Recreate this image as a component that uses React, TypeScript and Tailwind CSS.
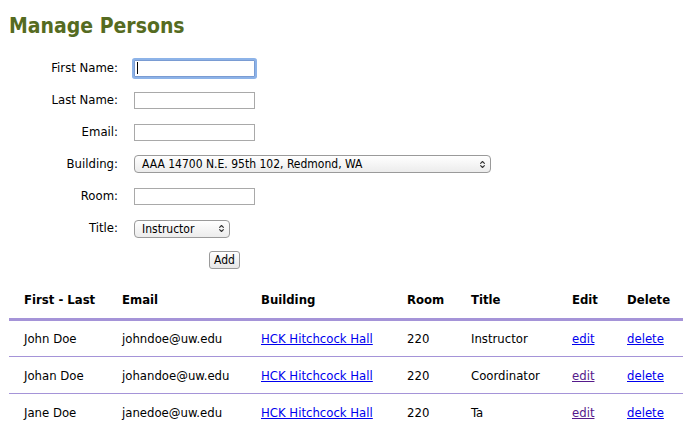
import { ChevronsUpDown } from "lucide-react";

const people = [
  { name: "John Doe", email: "johndoe@uw.edu", title: "Instructor", visited: false },
  { name: "Johan Doe", email: "johandoe@uw.edu", title: "Coordinator", visited: true },
  { name: "Jane Doe", email: "janedoe@uw.edu", title: "Ta", visited: true },
];

function Field({ label, children }: { label: string; children: React.ReactNode }) {
  return (
    <div className="flex items-center h-8">
      <label className="w-[118px] pr-0 text-right">{label}</label>
      <div className="ml-4 flex items-center">{children}</div>
    </div>
  );
}

function TextBox({ focused }: { focused?: boolean }) {
  return (
    <div
      className={
        focused
          ? "w-[121px] h-[17px] border border-[#7a9cd3] bg-white shadow-[0_0_0_2px_#8db3e8] rounded-[1px] flex items-center pl-[2px]"
          : "w-[121px] h-[17px] border border-[#a9a9a9] bg-white"
      }
    >
      {focused && <span className="w-px h-[12px] bg-black" />}
    </div>
  );
}

function Select({ value, width }: { value: string; width: string }) {
  return (
    <div
      className={`${width} h-[18px] border border-[#9a9a9a] rounded-[4px] bg-gradient-to-b from-white to-[#ececec] flex items-center justify-between pl-[7px] pr-[3px] text-[12px]`}
    >
      <span>{value}</span>
      <ChevronsUpDown className="w-[9px] h-[9px] text-[#333]" strokeWidth={3} />
    </div>
  );
}

export default function App() {
  return (
    <div
      className="bg-white w-[694px] h-[446px] overflow-hidden text-[13px] text-black"
      style={{ fontFamily: '"DejaVu Sans Condensed", "DejaVu Sans", sans-serif' }}
    >
      <h1 className="pl-[9px] pt-[12px] text-[21px] font-bold text-[#556b21] leading-[28px]">
        Manage Persons
      </h1>

      <div className="mt-[12px]">
        <Field label="First Name:">
          <TextBox focused />
        </Field>
        <Field label="Last Name:">
          <TextBox />
        </Field>
        <Field label="Email:">
          <TextBox />
        </Field>
        <Field label="Building:">
          <Select value="AAA 14700 N.E. 95th 102, Redmond, WA" width="w-[357px]" />
        </Field>
        <Field label="Room:">
          <TextBox />
        </Field>
        <Field label="Title:">
          <div className="pt-px">
            <Select value="Instructor" width="w-[96px]" />
          </div>
        </Field>
        <div className="flex items-center h-8 pl-[209px]">
          <button className="h-[18px] px-[4px] border border-[#9a9a9a] rounded-[3px] bg-gradient-to-b from-white to-[#e6e6e6] text-[12px] leading-none">
            Add
          </button>
        </div>
      </div>

      <table className="ml-[9px] mt-[9px] w-[674px] border-collapse">
        <thead>
          <tr className="h-[34px] border-b-[3px] border-[#a594d8] font-bold text-left">
            <th className="pl-[15px] w-[113px] pb-[4px]">First - Last</th>
            <th className="w-[139px] pb-[4px]">Email</th>
            <th className="w-[146px] pb-[4px]">Building</th>
            <th className="w-[64px] pb-[4px]">Room</th>
            <th className="w-[101px] pb-[4px]">Title</th>
            <th className="w-[55px] pb-[4px]">Edit</th>
            <th className="pb-[4px]">Delete</th>
          </tr>
        </thead>
        <tbody>
          {people.map((p, i) => (
            <tr
              key={p.name}
              className={i < people.length - 1 ? "h-[37px] border-b border-[#a594d8]" : "h-[37px]"}
            >
              <td className="pl-[15px] pt-[2px]">{p.name}</td>
              <td className="pt-[2px]">{p.email}</td>
              <td className="pt-[2px]">
                <a href="#" className="text-[#0000ee] underline">
                  HCK Hitchcock Hall
                </a>
              </td>
              <td className="pt-[2px]">220</td>
              <td className="pt-[2px]">{p.title}</td>
              <td className="pt-[2px]">
                <a href="#" className={p.visited ? "text-[#551a8b] underline" : "text-[#0000ee] underline"}>
                  edit
                </a>
              </td>
              <td className="pt-[2px]">
                <a href="#" className="text-[#0000ee] underline">
                  delete
                </a>
              </td>
            </tr>
          ))}
        </tbody>
      </table>
    </div>
  );
}
